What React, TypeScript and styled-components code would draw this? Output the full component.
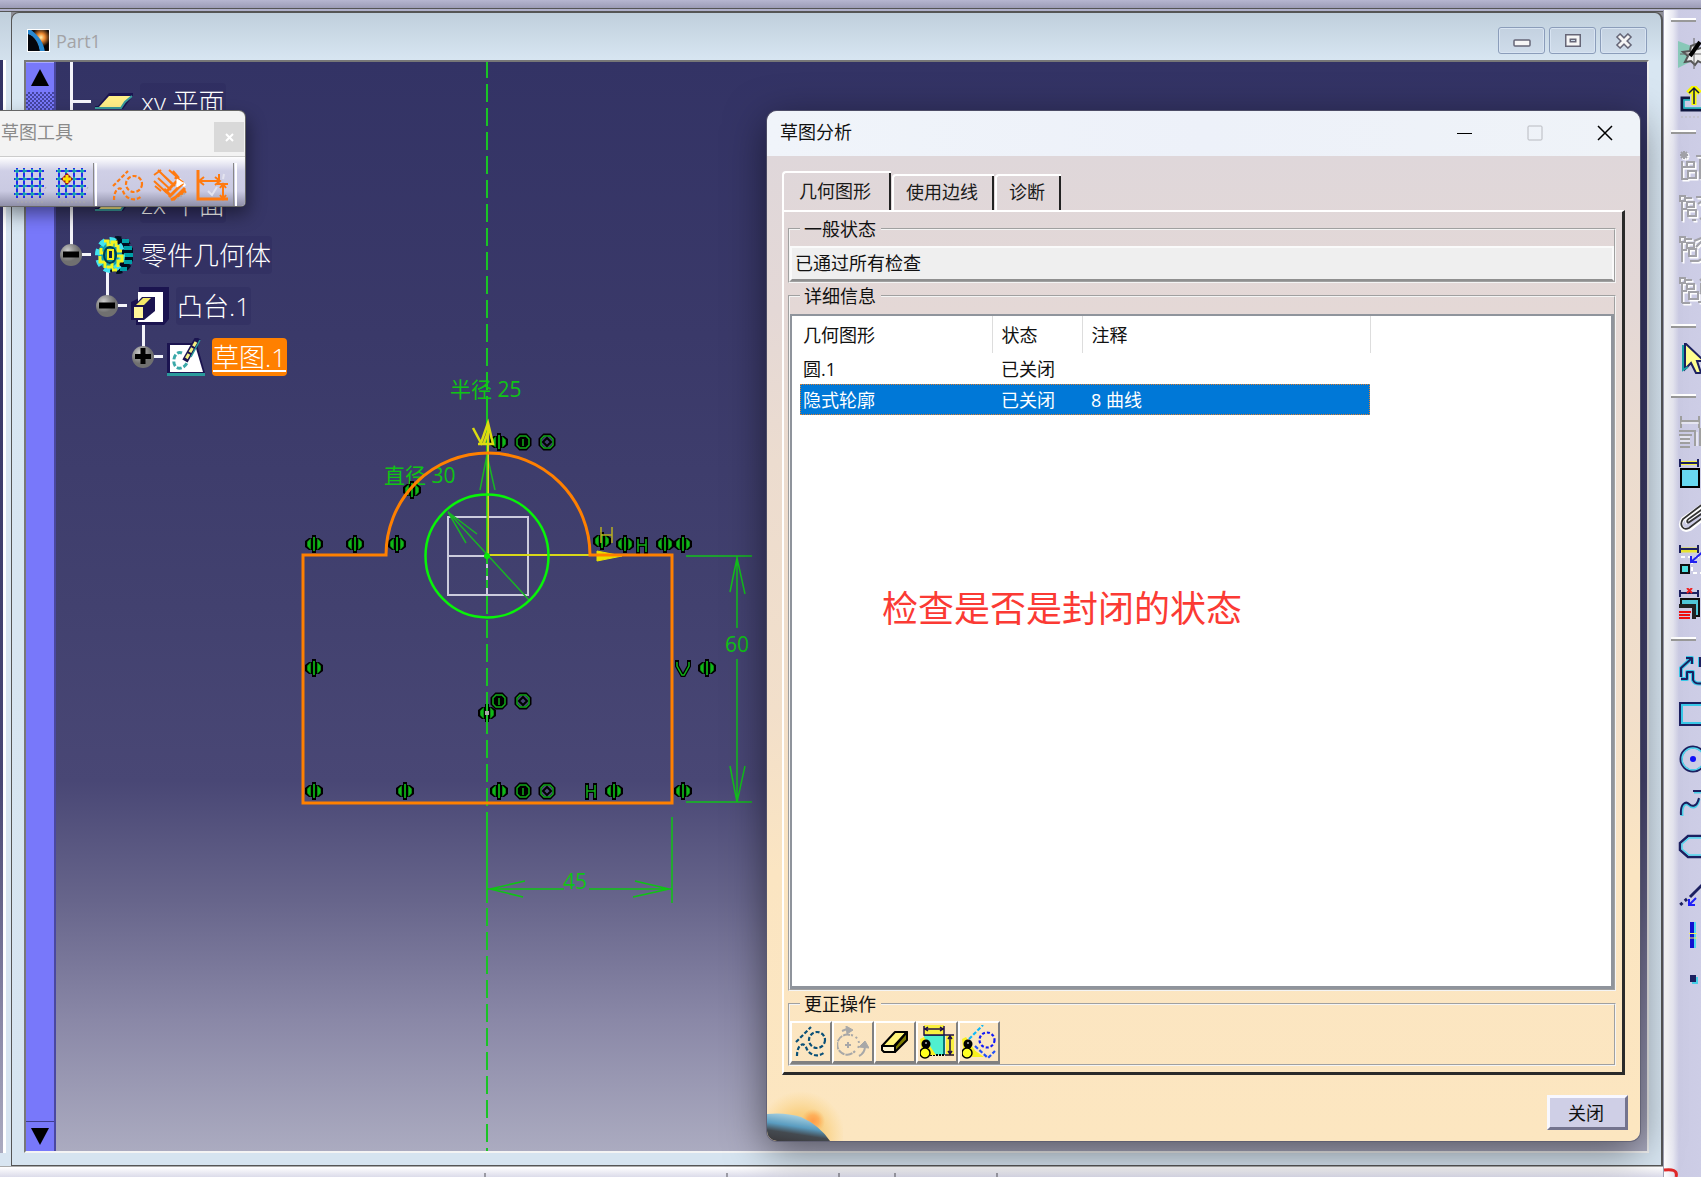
import React from "react";
import styled, { createGlobalStyle, css } from "styled-components";

const uiFont = `"Open Sans", "Noto Sans CJK SC", sans-serif`;

const GlobalStyle = createGlobalStyle`
  * { box-sizing: border-box; }
  html, body { margin: 0; height: 100%; overflow: hidden; }
  #root { height: 100%; }
  body, button, input { font-family: ${uiFont}; font-size: 18px; color: #111; }
  button { padding: 0; border: 0; background: none; }
`;

/* ---------- application frame ---------- */

const Page = styled.div`
  position: relative;
  display: flex;
  flex-direction: column;
  height: 100vh;
  overflow: hidden;
  background: #c9c9e2;
`;

const TopStrip = styled.div`
  flex: none;
  height: 12px;
  border-bottom: 4px double #555;
  background: linear-gradient(#b6b6d0, #9c9cb6 8px, #8c8c8c 8px);
`;

const Body = styled.div`
  flex: 1;
  min-height: 0;
  display: flex;
`;

const Desk = styled.div`
  flex: 1;
  min-width: 0;
  display: flex;
  flex-direction: column;
`;

const Windows = styled.div`
  flex: 1;
  min-height: 0;
  display: flex;
  background: #8c8c94;
`;

const viewGradient = `linear-gradient(#333365 0%, #3a3969 25%, #42416f 50%, #494775 66%, #67658b 77%, #8a88a7 88%, #ababc0 100%)`;

const NeighbourWindow = styled.div`
  flex: none;
  width: 11px;
  padding: 48px 0 13px;
  background: linear-gradient(#c0cfdc, #d8e5f1 60px);
  > div {
    height: 100%;
    width: 6px;
    border-right: 3px solid #fff;
    background: ${viewGradient} padding-box;
  }
`;

const PartWindow = styled.section`
  flex: 1;
  min-width: 0;
  display: flex;
  flex-direction: column;
  border: 1px solid #555;
  border-width: 1px 2px 1px 1px;
  border-radius: 8px 8px 0 0;
  padding: 0 12px 12px;
  background: linear-gradient(#c0cfdc, #d8e6f2 48px, #d6e4f0);
`;

const PartTitle = styled.header`
  flex: none;
  display: flex;
  align-items: center;
  gap: 6px;
  height: 47px;
  padding: 8px 2px 0 3px;
  color: #a3a3a6;
  span { flex: 1; font-size: 18px; }
`;

const CaptionButtons = styled.div`
  display: flex;
  gap: 4px;
  align-self: flex-start;
  padding-top: 6px;
`;

const CaptionButton = styled.button`
  display: grid;
  place-items: center;
  width: 47px;
  height: 27px;
  border: 1px solid #8b9dba;
  border-radius: 3px;
  box-shadow: inset 0 0 0 1px #d8e4f2;
  background: linear-gradient(#c3d1e0, #cfdcea);
`;

const View = styled.div`
  flex: 1;
  min-height: 0;
  display: flex;
  border: 2px solid #777;
  border-right-color: #eee;
  border-bottom-color: #f4f4f4;
  background: ${viewGradient};
`;

const ScrollBar = styled.div`
  flex: none;
  display: flex;
  flex-direction: column;
  width: 30px;
  border-right: 2px solid #4a48a0;
  background: #7878fa;
`;

const ScrollButton = styled.button<{ $down?: boolean }>`
  height: 30px;
  display: grid;
  place-items: center;
  border-top: 1px solid ${p => (p.$down ? "#3e3c90" : "#a8a8ff")};
`;

const ScrollTrough = styled.div`
  flex: 1;
  background: repeating-conic-gradient(#4444a0 0 25%, #7878fa 0 50%) 0 0 / 4px 4px;
  &::after { content: ""; display: block; height: calc(100% - 90px); margin-top: 90px; background: #7878fa; }
`;

const Canvas = styled.div`
  flex: 1;
  position: relative;
  isolation: isolate;
  min-width: 0;
  overflow: hidden;
`;

const Drawing = styled.svg`
  position: absolute;
  inset: 0;
  width: 100%;
  height: 100%;
  font-family: ${uiFont};
`;

/* ---------- specification tree ---------- */

const Tree = styled.ul`
  position: relative;
  margin: 0;
  padding: 14px 0 0 4px;
  list-style: none;
  ul { margin: 0; padding: 0 0 0 36px; list-style: none; }
`;

const Row = styled.div<{ $bare?: boolean }>`
  position: relative;
  display: flex;
  align-items: center;
  height: 51px;
  &::before {
    content: "";
    position: absolute;
    left: 10px;
    top: -26px;
    width: 3px;
    height: 51px;
    background: #f4f4fa;
  }
  &::after {
    content: "";
    position: absolute;
    left: ${p => (p.$bare ? 11 : 22)}px;
    top: 24px;
    width: ${p => (p.$bare ? 20 : 9)}px;
    height: 3px;
    background: #f4f4fa;
  }
  > svg { flex: none; position: relative; z-index: 1; }
`;

const Spacer = styled.span<{ $w: number }>`
  flex: none;
  width: ${p => p.$w}px;
`;

const Label = styled.span<{ $active?: boolean }>`
  margin-left: 7px;
  padding: 0 1px;
  height: 38px;
  border-radius: 4px;
  background: ${p => (p.$active ? "#ff8000" : "rgba(40, 36, 88, 0.3)")};
  color: #fff;
  font-size: 26px;
  font-weight: 300;
  line-height: 39px;
  white-space: nowrap;
  ${p => p.$active && css`text-decoration: underline; text-decoration-thickness: 2px; text-underline-offset: 3px;`}
`;

/* ---------- status bar and right tool column ---------- */

const StatusBar = styled.footer`
  flex: none;
  display: flex;
  height: 11px;
  border-top: 1px solid #aaa;
  background: linear-gradient(#fff, #dcdcea);
`;

const StatusCell = styled.div<{ $w: number }>`
  width: ${p => p.$w}px;
  margin-top: 6px;
  border-right: 2px solid #9a9aa4;
`;

const RedMark = styled.svg`
  position: absolute;
  right: 21px;
  bottom: 0;
`;

const ToolColumn = styled.nav`
  flex: none;
  display: flex;
  flex-direction: column;
  align-items: flex-start;
  width: 38px;
  margin-top: -2px;
  padding: 8px 0 0 7px;
  overflow: hidden;
  border-left: 1px solid #a0a0b4;
  background: linear-gradient(90deg, #fff 0, #e8e8f2 9px, #cbcbe4 15px, #cdcde6);
`;

const ToolHandle = styled.div`
  flex: none;
  width: 25px;
  height: 4px;
  border-top: 2px solid #fff;
  border-bottom: 2px solid #999;
`;

const ToolGroup = styled.div<{ $row: number; $top: number; $bottom: number }>`
  flex: none;
  display: grid;
  grid-auto-rows: ${p => p.$row}px;
  padding: ${p => p.$top}px 0 ${p => p.$bottom}px;
`;

const ToolButton = styled.button`
  display: grid;
  align-items: center;
  width: 36px;
  padding-left: 7px;
`;

/* ---------- floating toolbar ---------- */

const Palette = styled.section`
  position: absolute;
  left: 0;
  top: 111px;
  width: 245px;
  border-radius: 0 6px 4px 0;
  overflow: hidden;
  background: #f3f3f3;
  box-shadow: 0 0 0 1px #666, 3px 8px 18px rgba(0, 0, 0, 0.45);
`;

const PaletteTitle = styled.header`
  display: flex;
  justify-content: space-between;
  height: 45px;
  padding-left: 1px;
  color: #8a8a8a;
  line-height: 43px;
`;

const PaletteClose = styled.button`
  width: 30px;
  height: 30px;
  margin: 11px 1px 0 0;
  background: #d9d9d9;
  color: #f6f6f6;
  display: grid;
  place-items: center;
`;

const PaletteTools = styled.div`
  display: flex;
  align-items: center;
  height: 50px;
  padding: 6px 8px 0 9px;
  border-top: 1px solid #ccc;
  background: linear-gradient(#fff, #cfcfe6 14px, #cacae2 34px, #8f8fa8);
`;

const PaletteTool = styled.button`
  width: 42px;
  height: 42px;
  display: grid;
  place-items: center;
`;

const PaletteRule = styled.div`
  width: 4px;
  height: 44px;
  border-left: 1px solid #888;
  border-right: 2px solid #fff;
`;

/* ---------- analysis dialog ---------- */

const Dialog = styled.section`
  position: absolute;
  top: 111px;
  right: 61px;
  bottom: 36px;
  width: 873px;
  display: flex;
  flex-direction: column;
  overflow: hidden;
  border-radius: 10px;
  background: linear-gradient(#dfd7da 45px, #e4d8d6 200px, #ecdccf 350px, #f2dfca 600px, #fbe5c2 760px, #fce6c0);
  box-shadow: 0 0 0 1px rgba(90, 90, 110, 0.7), 0 10px 40px rgba(0, 0, 0, 0.5);
`;

const DialogTitle = styled.header`
  flex: none;
  display: flex;
  align-items: flex-start;
  height: 45px;
  padding-left: 13px;
  background: linear-gradient(90deg, #f0f4fa, #edf1f9 50%, #eff3f8);
  h1 { flex: 1; margin: 0; font-size: 18px; font-weight: 400; line-height: 42px; }
  button { width: 70px; height: 43px; display: grid; place-items: center; }
`;

const DialogBody = styled.div`
  flex: 1;
  min-height: 0;
  display: flex;
  flex-direction: column;
  padding: 15px 15px 0;
`;

const TabList = styled.div`
  flex: none;
  display: flex;
  align-items: flex-end;
  height: 39px;
`;

const Tab = styled.button<{ $active?: boolean }>`
  height: ${p => (p.$active ? 40 : 36)}px;
  margin-bottom: ${p => (p.$active ? -1 : 0)}px;
  margin-right: 1px;
  padding: ${p => (p.$active ? "0 20px 5px 15px" : "0 16px 4px 12px")};
  border: solid #fff;
  border-width: 2px 0 0 2px;
  border-radius: 4px 0 0 0;
  box-shadow: inset -2px 0 0 #222;
  color: #1a1a1a;
`;

const TabPanel = styled.div`
  flex: 1;
  min-height: 0;
  display: flex;
  flex-direction: column;
  padding: 4px 6px 6px 4px;
  border: 2px solid #fff;
  border-right: 3px solid #2a2a2a;
  border-bottom: 3px solid #2a2a2a;
`;

const Group = styled.fieldset<{ $fill?: boolean; $gap: number }>`
  min-width: 0;
  margin: 0;
  padding: 0;
  border: 2px groove #f4f4f4;
  ${p => p.$fill && css`flex: 1; min-height: 0; display: flex; flex-direction: column;`}
  legend {
    margin: 0 0 ${p => p.$gap}px 10px;
    padding: 0 5px 0 4px;
    height: 26px;
    line-height: 27px;
  }
`;

const StatusField = styled.input`
  display: block;
  width: 100%;
  height: 35px;
  padding: 0 0 4px 3px;
  border: 2px solid #fafafa;
  border-bottom-color: #8f8f8f;
  background: #efefef;
  outline: 0;
`;

const ListBox = styled.div`
  position: relative;
  flex: 1;
  padding: 0 8px;
  border: 2px solid #8f949c;
  border-width: 2px 3px 3px 2px;
  background: #fff;
`;

const Table = styled.table`
  table-layout: fixed;
  width: 570px;
  border-collapse: collapse;
  th, td { height: 31px; padding: 0 0 0 3px; font-weight: 400; text-align: left; line-height: 26px; }
  th { height: 37px; border-right: 1px solid #ddd; }
  th + th, td + td { padding-left: 9px; }
`;

const DataRow = styled.tr<{ $selected?: boolean }>`
  ${p => p.$selected && css`
    background: #0078d7;
    color: #fff;
    outline: 1px dotted #e08030;
    outline-offset: -1px;
  `}
`;

const Note = styled.p`
  position: absolute;
  left: 90px;
  top: 268px;
  margin: 0;
  color: #fb3a34;
  font-size: 36px;
  line-height: 50px;
  white-space: nowrap;
`;

const Actions = styled.div`
  display: flex;
  height: 43px;
`;

const ActionButton = styled.button`
  width: 42px;
  height: 43px;
  display: grid;
  place-items: center;
  border: 2px solid #fff;
  border-right: 2px solid #808080;
  border-bottom: 3px solid #808080;
`;

const DialogFooter = styled.footer`
  flex: none;
  display: flex;
  justify-content: space-between;
  align-items: flex-start;
  height: 66px;
`;

const Globe = styled.svg`
  display: block;
`;

const CloseButton = styled.button`
  width: 81px;
  height: 35px;
  margin: 20px 12px 0 0;
  padding: 0 3px 2px 0;
  border: 3px solid #f8f8ff;
  border-right-color: #74748e;
  border-bottom-color: #74748e;
  background: #cfcfe6;
`;

/* ---------- icons ---------- */

const Ball = ({ plus }: { plus?: boolean }) => (
  <svg width="22" height="22" viewBox="0 0 22 22">
    <defs>
      <radialGradient id="ball" cx="35%" cy="30%">
        <stop offset="0" stopColor="#ccc" />
        <stop offset=".6" stopColor="#909090" />
        <stop offset="1" stopColor="#707070" />
      </radialGradient>
    </defs>
    <circle cx="11" cy="11" r="11" fill="url(#ball)" />
    <path d={plus ? "M3 10.500H19M11 2V18" : "M3 10.500H19"} stroke="#000" strokeWidth={plus ? 5 : 6} />
  </svg>
);

const PlaneIcon = () => (
  <svg width="38" height="18" viewBox="0 0 38 18">
    <path d="M14 0H38V3L28 16H0V13H3Z" fill="#1b1450" />
    <path d="M14 3H36L26 14H4Z" fill="#ffee86" />
    <path d="M37 3L30 9L26 15H0" fill="none" stroke="#3a9c9c" strokeWidth="2" />
  </svg>
);

const GearIcon = () => (
  <svg width="38" height="40" viewBox="0 0 38 40">
    <ellipse cx="23" cy="20" rx="14" ry="17" fill="#000820" stroke="#001020" strokeWidth="4" strokeDasharray="6 4" />
    <path d="M27 6h7M29 13h8M29 20h9M29 27h8M25 34h7" stroke="#00a0a8" strokeWidth="4" />
    <ellipse cx="15" cy="20" rx="12" ry="15" fill="#10a0b0" stroke="#40e4f0" strokeWidth="6" strokeDasharray="6 4.500" />
    <path d="M9 6h4v4h4v-3h4v5M23 10v6h4M22 21h5v5h-4v6M6 13v5h4M5 21v6h5v6M12 32h5v-4M17 35h5" fill="none" stroke="#f4f420" strokeWidth="3" />
    <ellipse cx="15" cy="20" rx="6" ry="8" fill="#0c8890" stroke="#003c50" strokeWidth="2" />
    <path d="M13 15h5v9h-5z" fill="#102050" stroke="#f4f020" strokeWidth="2" />
  </svg>
);

const PadIcon = () => (
  <svg width="38" height="38" viewBox="0 0 38 38">
    <path d="M8 0H38V32L33 38H5V33H0V15L8 11Z" fill="#1b1450" />
    <path d="M7 5H32V35H7Z" fill="#fff" />
    <path d="M2 20L11 10H24V24L13 33H2Z" fill="#1b1450" />
    <path d="M3 20H12V31H3Z" fill="#fff59a" />
    <path d="M5 18L12 11H20L13 18Z" fill="#f4e868" />
  </svg>
);

const SketchIcon = () => (
  <svg width="38" height="38" viewBox="0 0 38 38">
    <path d="M0 5H25L31 0V10L38 35V38H0Z" fill="#1b1450" />
    <path d="M3 7H28L36 34H3Z" fill="#fff" />
    <path d="M0 36.500H38" stroke="#2a9a9c" strokeWidth="3" />
    <path d="M15 15C8 12 4 24 9 29C13 32 18 29 20 25" fill="none" stroke="#3aa8a8" strokeWidth="3" strokeDasharray="5 2" />
    <path d="M31 0L18 23" stroke="#1b1450" strokeWidth="6" />
    <path d="M29 4L19 21" stroke="#f4f080" strokeWidth="3" strokeDasharray="5 2" />
    <path d="M33 2L24 19" stroke="#2a9a9c" strokeWidth="1.500" />
  </svg>
);

const PartLogo = () => (
  <svg width="23" height="23" viewBox="0 0 22 22">
    <defs>
      <radialGradient id="flare" cx="62%" cy="35%" r="45%">
        <stop offset="0" stopColor="#fff0b0" />
        <stop offset=".4" stopColor="#f08a30" />
        <stop offset="1" stopColor="#080404" />
      </radialGradient>
    </defs>
    <rect width="22" height="22" fill="#fff" />
    <rect x="1" y="1" width="20" height="20" fill="url(#flare)" />
    <path d="M1 1H4C12 7 16 14 17 21H12C11 13 7 7 1 5Z" fill="#2888d0" />
    <path d="M1 5C7 7 11 13 12 21H1Z" fill="#04060c" />
  </svg>
);

const GridIcon = ({ snap }: { snap?: boolean }) => (
  <svg width="34" height="36" viewBox="0 0 34 36">
    <path d="M4 35h28M8 37h20M33 20l-2 4" stroke="#aaa" strokeDasharray="2 2" />
    <path d="M4 1V31M11 1V31M19 1V31M27 1V31M1 4H31M1 12H31M1 19H31M1 27H31" stroke="#2428f0" strokeWidth="2" />
    <path d="M4 1V31M11 1V31M19 1V31M27 1V31M1 4H31M1 12H31M1 19H31M1 27H31" stroke="#18a0b0" strokeWidth="2" strokeDasharray="4 3.700" strokeDashoffset="-1" />
    {snap && (
      <g>
        <path d="M12 6L18 12L12 18L6 12Z" fill="#a01818" />
        <path d="M12 8V16M8 12H16" stroke="#ffe000" strokeWidth="3" />
      </g>
    )}
  </svg>
);

const ConstructIcon = ({ c = "#ff7a10", drop = 0 }: { c?: string; drop?: number }) => (
  <svg width="32" height={32 + drop} viewBox={`0 ${-drop} 32 ${32 + drop}`} fill="none" stroke={c} strokeWidth="2.200" strokeDasharray="4 2">
    <path d="M1 16L16 1" />
    <path d="M2 30C2 18 9 16 11 21C13 28 22 33 30 26" />
    <circle cx="22" cy="14" r="8" />
  </svg>
);

const ConstraintHandIcon = () => (
  <svg width="34" height="36" viewBox="0 -2 34 36" fill="none" stroke="#ff7a10" strokeWidth="2">
    <path d="M1 6L8 1M5 1L19 15M1 12L14 24M5 9L18 21M9 5L22 17M2 17L8 22M16 1L24 8M20 2L26 9" />
    <path d="M26 10L32 17" stroke="#fff" strokeWidth="3" />
    <path d="M14 22L24 12M16 28L30 14M20 31L32 19M11 20L18 27M22 8L30 14M18 31L33 22" strokeWidth="3" />
    <path d="M24 10V18L30 14Z" fill="#fff" stroke="#fff" strokeWidth="1" />
    <path d="M24 30l8-6" stroke="#aaa" strokeDasharray="2 2" />
  </svg>
);

const DimensionIcon = () => (
  <svg width="32" height="36" viewBox="0 -2 32 36" fill="none" stroke="#ff7a10" strokeWidth="2">
    <path d="M2 1V30H32" strokeWidth="3" />
    <path d="M3 12H24M8 8L3 12L8 16M19 8L24 12L19 16M23 5V16" />
    <path d="M27 15V30M24 19L27 15L30 19M24 26L27 30L30 26M21 15H32" />
    <path d="M12 22L16 26L21 18M28 5L27 10" stroke="#e4e4f0" />
  </svg>
);

const RotateIcon = () => (
  <svg width="32" height="32" viewBox="0 0 32 32" fill="none" stroke="#a8a8a8" strokeWidth="2">
    <path d="M13 9A10 10 0 1 0 18 25" strokeDasharray="7 1" />
    <path d="M14 9C20 10 24 16 21 22" strokeDasharray="2 3" />
    <path d="M11 16V22M8 19H14M5 5L10 3" />
    <path d="M9 0L16 4L10 8Z" fill="#a8a8a8" strokeWidth="1" />
    <path d="M28 20C28 25 26 28 22 30" />
    <path d="M22 21L28 15L32 22Z" fill="#a8a8a8" strokeWidth="1" />
  </svg>
);

const EraserIcon = () => (
  <svg width="28" height="24" viewBox="0 0 28 24" stroke="#000" strokeWidth="2" strokeLinejoin="round">
    <path d="M1 16L14 2H26L13 16Z" fill="#fff47a" />
    <path d="M26 2V10L14 22V16Z" fill="#7c7a00" />
    <path d="M1 16H14V22H3L1 20Z" fill="#fdf4d0" />
  </svg>
);

const Stamp = () => (
  <g>
    <path d="M0 14L4 12L16 30H2Z" fill="#f8f020" />
    <circle cx="6" cy="19" r="4.500" fill="#000" />
    <circle cx="5" cy="28" r="5" fill="#ffff20" stroke="#000" strokeWidth="1.500" />
    <path d="M6 17v2" stroke="#fff" />
  </g>
);

const AnalyseDimIcon = () => (
  <svg width="34" height="34" viewBox="0 0 34 34" fill="none">
    <path d="M4 10H24V30H4Z" fill="#50f0d0" />
    <path d="M4 10H24V30" stroke="#087880" strokeWidth="2" />
    <path d="M4 0H24V10H4ZM26 10H34V31H26Z" fill="#f8f040" />
    <path d="M4 1V10H24V1M5 4H23M8 2L5 4L8 6M20 2L23 4L20 6M25 10H34M25 30H34M30 11V29M28 14L30 11L32 14M28 26L30 29L32 26" stroke="#201048" strokeWidth="1.500" />
    <path d="M10 30H24" stroke="#000" strokeWidth="2" strokeDasharray="2 1" />
    <Stamp />
  </svg>
);

const AnalyseGeoIcon = () => (
  <svg width="34" height="34" viewBox="0 0 34 34" fill="none">
    <path d="M8 22L22 32H10Z" fill="#f8f020" />
    <path d="M7 14L21 0" stroke="#10b8f8" strokeWidth="2.200" strokeDasharray="4 2" />
    <path d="M13 21L26 33L33 26" stroke="#2050f8" strokeWidth="2.200" strokeDasharray="4 2" />
    <circle cx="25" cy="15" r="7.500" stroke="#1018f8" strokeWidth="2.200" strokeDasharray="3 2" />
    <Stamp />
  </svg>
);

const Navy = "#1c2060";

const Embossed = ({ d }: { d: string }) => (
  <g fill="none" strokeWidth="2">
    <path d={d} stroke="#fff" transform="translate(1.500 1.500)" />
    <path d={d} stroke="#a2a2a8" />
  </g>
);

const branch = "M2 4h5v5h-5zM4 9V29M4 17H9M9 10h7v5h-7zM8 6H14";

const toolShapes: Record<string, React.ReactNode> = {
  workbench: (
    <g>
      <path d="M0 3L16 9V22L0 30Z" fill="#88c8b8" />
      <path d="M18 6L20 11L26 9V26L20 23L17 27L13 23L7 24L10 18L5 14L12 13L13 8Z" fill="#eee" stroke="#555" strokeWidth="2" />
      <path d="M16 0V31M2 16H28" stroke="#666" />
      <path d="M22 4L12 18" stroke="#000" strokeWidth="4" />
    </g>
  ),
  exit: (
    <g fill="none">
      <path d="M12 12H4V24H28" stroke="#101840" strokeWidth="3" />
      <path d="M12 14H6V22H28" stroke="#10b0b8" strokeWidth="1.500" />
      <path d="M16 19V3M10 7L16 1L22 7" stroke="#f8f800" strokeWidth="5" />
      <path d="M16 18V3M11 7L16 2L21 7" stroke="#101840" strokeWidth="1.500" />
      <path d="M3 31h22" stroke="#bbb" strokeDasharray="2 2" />
    </g>
  ),
  tree1: <Embossed d="M6 0V8M2 4H10M3 1L9 7M9 1L3 7M4 10V28H10M4 16H9M9 11h7v5h-7zM10 20h8v7h-8zM18 5H28M22 8V28M24 12L28 8" />,
  tree2: <Embossed d={`${branch}M10 18h8v6h-8zM18 5H28M20 12L28 6M14 28H18M22 26L27 30`} />,
  tree3: <Embossed d={`${branch}M11 16h7v7h-7zM16 8L28 3M18 14L24 8M12 28H20L27 24`} />,
  tree4: <Embossed d={`${branch}M11 18h9v7h-9zM4 29H12M22 5L28 12L22 20M20 28H28M23 9V18`} />,
  select: (
    <g>
      <path d="M7 0V26L13 20L18 30H23L19 18H26Z" fill="#ffff90" stroke={Navy} strokeWidth="2" />
      <path d="M5 2V27L10 24" fill="none" stroke="#18a0a8" strokeWidth="2" />
    </g>
  ),
  props: (
    <g fill="none" stroke="#a0a0a0" strokeWidth="2">
      <path d="M3 0V12M21 0V12M3 5H21M1 15H17V30M1 19H14M2 23H12M2 27H12M2 31H12M22 12V30" />
      <path d="M3 7H21M19 16V30M2 21H12M2 25H12" stroke="#fff" strokeWidth="1" />
    </g>
  ),
  constraint: (
    <g>
      <path d="M2 2H20V6H2Z" fill="#f4f040" />
      <path d="M2 0V8M20 0V8M3 4H19" stroke={Navy} strokeWidth="2" />
      <path d="M3 10H21V28H3Z" fill="#68d8f0" stroke="#000" strokeWidth="2" />
    </g>
  ),
  clip: (
    <g fill="none">
      <path d="M28 1L5 17C0 24 5 30 12 27L28 14M10 21C8 19 10 17 12 16L26 6" stroke="#fff" strokeWidth="4" />
      <path d="M26 1L5 17C1 23 5 29 11 26L28 13M10 21C8 19 10 17 12 16L26 6M10 21L26 10" stroke="#333" strokeWidth="1.800" />
    </g>
  ),
  animate: (
    <g fill="none">
      <path d="M2 5H20" stroke="#e8e430" strokeWidth="5" />
      <path d="M2 0V8M20 0V8M3 4H19" stroke={Navy} strokeWidth="2" />
      <path d="M3 20H11V28H3Z" fill="#50e0e0" stroke="#111" strokeWidth="2" />
      <path d="M3 12H24V28H14V18" stroke="#fff" strokeWidth="2" strokeDasharray="4 3" />
      <path d="M28 4L13 17M13 11V17H19" stroke="#2020f0" strokeWidth="2" />
    </g>
  ),
  edit: (
    <g fill="none">
      <path d="M2 2V9M20 2V9M3 5H19" stroke={Navy} strokeWidth="2" />
      <path d="M9 0L14 5M14 0L9 5" stroke="#f02020" strokeWidth="2" />
      <path d="M3 11H21V28H17V17H3Z" fill="#50c8d8" stroke="#111" strokeWidth="2" />
      <path d="M1 18H16V31" stroke="#222" strokeWidth="4" />
      <path d="M1 24H13M1 27H12M1 30H12" stroke="#f01010" strokeWidth="2" />
    </g>
  ),
  profile: (
    <g fill="none" strokeLinejoin="round">
      <path d="M3 24H9V17H15V25Q17 30 26 28M22 2V12M3 22V13L13 4M8 3H14V9" stroke="#38c8e8" strokeWidth="4" />
      <path d="M3 24H9V17H15V25Q17 30 26 28M22 2V12M3 22V13L13 4M8 3H14V9" stroke={Navy} strokeWidth="2" />
    </g>
  ),
  rect: (
    <g fill="none">
      <path d="M4 6H28V24H4Z" stroke="#38c8e8" strokeWidth="2" />
      <path d="M2 4H28V26H2Z" stroke={Navy} strokeWidth="2" />
    </g>
  ),
  circle: (
    <g fill="none">
      <circle cx="15" cy="16" r="12" stroke={Navy} strokeWidth="3" />
      <circle cx="15" cy="16" r="11" stroke="#50d8f0" strokeWidth="1.500" />
      <circle cx="15" cy="16" r="3" fill="#1010f8" />
    </g>
  ),
  spline: (
    <g fill="none">
      <path d="M4 29C3 17 8 15 11 18S19 22 21 12M16 5H28" stroke="#48d0e8" strokeWidth="3" />
      <path d="M3 28C2 16 8 14 11 17S19 20 21 11M15 4H28" stroke={Navy} strokeWidth="2" />
    </g>
  ),
  ellipse: (
    <g fill="none">
      <path d="M28 5H10L2 12V19L10 26H28" stroke={Navy} strokeWidth="2.500" />
      <path d="M28 7H11L4 13V18L11 24H28" stroke="#50d8f0" strokeWidth="1.500" />
    </g>
  ),
  line: (
    <g fill="none">
      <path d="M28 6L12 22" stroke={Navy} strokeWidth="3" />
      <path d="M9 24L1 31" stroke={Navy} strokeWidth="3" strokeDasharray="3 3" />
      <path d="M18 23L11 30M11 24V30H17" stroke="#2020f8" strokeWidth="2" />
    </g>
  ),
  axis: (
    <g>
      <path d="M14 3V29" stroke="#1010d0" strokeWidth="4" />
      <path d="M17 3V29" stroke="#50d8f0" strokeWidth="2" />
      <path d="M11 14.500H19M11 19H19" stroke="#f4f060" />
    </g>
  ),
  point: (
    <g>
      <path d="M14 14H20V21H14Z" fill="#48d0e8" />
      <path d="M12 12H18V19H12Z" fill={Navy} />
    </g>
  ),
};

const toolGroups = [
  { row: 48, top: 8, bottom: 4, tools: [["workbench", "工作台"], ["exit", "退出工作台"]] },
  { row: 41, top: 12, bottom: 14, tools: [["tree1", "树 1"], ["tree2", "树 2"], ["tree3", "树 3"], ["tree4", "树 4"]] },
  { row: 62, top: 0, bottom: 4, tools: [["select", "选择"]] },
  { row: 43, top: 12, bottom: 12, tools: [["props", "约束对话框"], ["constraint", "约束"], ["clip", "固联"], ["animate", "动画约束"], ["edit", "编辑多重约束"]] },
  { row: 44, top: 8, bottom: 0, tools: [["profile", "轮廓"], ["rect", "矩形"], ["circle", "圆"], ["spline", "样条"], ["ellipse", "椭圆"], ["line", "直线"], ["axis", "轴"], ["point", "点"]] },
];

/* ---------- sketch geometry ---------- */

const Coincidence = ({ x, y }: { x: number; y: number }) => (
  <g transform={`translate(${x} ${y})`}>
    <path d="M-5 -6H-2V-9H2V-6H5L9 -3V3L5 6H2V9H-2V6H-5L-9 3V-3Z" fill="#000" />
    <path d="M-4 -4V4L-6 2V-2ZM4 -4V4L6 2V-2Z" fill="#10d018" stroke="#10b018" strokeWidth="1.500" />
    <path d="M0 -7V7" stroke="#10d018" strokeWidth="1.500" />
  </g>
);

const Ring = ({ x, y, bar }: { x: number; y: number; bar?: boolean }) => (
  <g transform={`translate(${x} ${y})`}>
    <path d="M-3 -7H3L7 -3V3L3 7H-3L-7 3V-3Z" fill={bar ? "#000" : "none"} stroke="#000" strokeWidth="3" />
    <path d="M-3 -6H3L6 -3V3L3 6H-3L-6 3V-3Z" fill="none" stroke="#10a818" strokeWidth="1.500" />
    {bar ? <path d="M0 -3V4" stroke="#10a818" strokeWidth="1.500" /> : <path d="M0 -4L4 0L0 4L-4 0Z" fill="none" stroke="#000" strokeWidth="2" />}
  </g>
);

const Glyph = ({ d }: { d: string }) => (
  <g fill="none">
    <path d={d} stroke="#000" strokeWidth="4" strokeLinecap="square" />
    <path d={d} stroke="#10b018" strokeWidth="1.500" />
  </g>
);

const coincidences = [
  [314, 544], [355, 544], [397, 544], [412, 490], [499, 442], [602, 541], [625, 544], [665, 544], [683, 544],
  [314, 668], [707, 668], [314, 791], [405, 791], [499, 791], [614, 791], [683, 791], [487, 713],
];

const Sketch = () => (
  <Drawing aria-label="Part1">
    <g transform="translate(-56 -62)" fill="none">
      <path d="M487 36V396M487 596V811M487 908V1160" stroke="#19c425" strokeWidth="2" strokeDasharray="18 6" />
      <path d="M487 396V556M487 812V903" stroke="#19c425" strokeWidth="2" />
      <path d="M448 517H528V595H448ZM448 556H487M487 556V595" stroke="#ccccdd" strokeWidth="2" />
      <path d="M487 556V588" stroke="#19c425" strokeWidth="2" strokeDasharray="8 4" />
      <g fill="#0fc414" fontSize="21">
        <text x="450" y="397">半径 25</text>
        <text x="384" y="483">直径 30</text>
        <text x="725" y="652">60</text>
        <text x="563" y="889">45</text>
      </g>
      <path d="M487 455L480 490M487 455L495 490M448 512L529 600M448 512L477 534M448 512L466 543" stroke="#19b425" strokeWidth="1.500" />
      <path d="M686 556H752M686 802H752M737 556V628M737 659V802M737 558L730 592M737 558L745 594M737 802L730 766M737 802L745 766" stroke="#12c01c" strokeWidth="1.500" />
      <path d="M487 889H564M589 889H672M672 817V903M490 889L525 881M490 889L523 897M669 889L635 881M669 889L633 897" stroke="#0fc414" strokeWidth="1.500" />
      {coincidences.map(([x, y]) => <Coincidence key={`${x}-${y}`} x={x} y={y} />)}
      <Ring x={523} y={442} bar />
      <Ring x={523} y={791} bar />
      <Ring x={547} y={442} />
      <Ring x={547} y={791} />
      <Ring x={499} y={701} bar />
      <Ring x={523} y={701} />
      <Glyph d="M638 539V552M646 539V552M638 545H646" />
      <Glyph d="M587 785V798M595 785V798M587 791H595" />
      <Glyph d="M677 662V666L682 675H684L689 666V662" />
      <path d="M488 556V422M487 555H600" stroke="#d8d818" strokeWidth="2" />
      <path d="M473 428L481 443L488 423L493 444H478M484 443L488 432" stroke="#dcdc10" strokeWidth="2.500" />
      <path d="M597 551L622 556L597 561Z" fill="#e8e000" stroke="#e8e000" />
      <path d="M601 527V543M612 527V543M601 535H612" stroke="#b8b020" strokeWidth="1.500" />
      <path d="M487 453V556" stroke="#30c820" strokeWidth="1" />
      <circle cx="487" cy="556" r="61.500" stroke="#08f408" strokeWidth="2.500" />
      <path d="M303 555H386A102 102 0 0 1 590 555H672V803H303Z" stroke="#ff8000" strokeWidth="3" />
      <circle cx="487" cy="556" r="3" fill="#08e808" />
      <path d="M487 700V727" stroke="#19c425" strokeWidth="2" />
      <rect x="485" y="711" width="4" height="4" fill="#aaa" />
    </g>
  </Drawing>
);

const rows = [
  ["圆.1", "已关闭", ""],
  ["隐式轮廓", "已关闭", "8 曲线"],
];

export default function App() {
  return (
    <Page>
      <GlobalStyle />
      <TopStrip />
      <Body>
        <Desk>
          <Windows>
            <NeighbourWindow><div /></NeighbourWindow>
            <PartWindow>
              <PartTitle>
                <PartLogo />
                <span>Part1</span>
                <CaptionButtons>
                  <CaptionButton aria-label="最小化">
                    <svg width="18" height="14"><rect x="1" y="6" width="16" height="6" rx="1" fill="#f6f6f6" stroke="#667" strokeWidth="1.500" /></svg>
                  </CaptionButton>
                  <CaptionButton aria-label="最大化">
                    <svg width="18" height="16"><rect x="4" y="4" width="10" height="7" fill="none" stroke="#667" strokeWidth="6" /><rect x="4" y="4" width="10" height="7" fill="none" stroke="#f6f6f6" strokeWidth="3" /></svg>
                  </CaptionButton>
                  <CaptionButton aria-label="关闭窗口">
                    <svg width="20" height="16" fill="none"><path d="M4 2L16 14M16 2L4 14" stroke="#667" strokeWidth="6" /><path d="M5 3L15 13M15 3L5 13" stroke="#f6f6f6" strokeWidth="3" /></svg>
                  </CaptionButton>
                </CaptionButtons>
              </PartTitle>
              <View>
                <ScrollBar>
                  <ScrollButton aria-label="向上"><svg width="18" height="18"><path d="M9 0L18 17H0Z" /></svg></ScrollButton>
                  <ScrollTrough />
                  <ScrollButton $down aria-label="向下"><svg width="18" height="18"><path d="M0 0H18L9 17Z" /></svg></ScrollButton>
                </ScrollBar>
                <Canvas>
                  <Sketch />
                  <Tree>
                    <li><Row $bare><Spacer $w={35} /><PlaneIcon /><Label>xy 平面</Label></Row></li>
                    <li><Row $bare><Spacer $w={35} /><PlaneIcon /><Label>yz 平面</Label></Row></li>
                    <li><Row $bare><Spacer $w={35} /><PlaneIcon /><Label>zx 平面</Label></Row></li>
                    <li>
                      <Row><Ball /><Spacer $w={13} /><GearIcon /><Label>零件几何体</Label></Row>
                      <ul>
                        <li>
                          <Row><Ball /><Spacer $w={13} /><PadIcon /><Label>凸台.1</Label></Row>
                          <ul>
                            <li><Row><Ball plus /><Spacer $w={13} /><SketchIcon /><Label $active>草图.1</Label></Row></li>
                          </ul>
                        </li>
                      </ul>
                    </li>
                  </Tree>
                </Canvas>
              </View>
            </PartWindow>
          </Windows>
          <StatusBar>
            <StatusCell $w={486} />
            <StatusCell $w={242} />
            <StatusCell $w={112} />
            <StatusCell $w={56} />
            <StatusCell $w={102} />
          </StatusBar>
        </Desk>
        <ToolColumn>
          {toolGroups.map(g => (
            <React.Fragment key={g.tools[0][0]}>
              <ToolHandle />
              <ToolGroup $row={g.row} $top={g.top} $bottom={g.bottom}>
                {g.tools.map(([name, label]) => (
                  <ToolButton key={name} aria-label={label}>
                    <svg width="28" height="32" viewBox="0 0 28 32">{toolShapes[name]}</svg>
                  </ToolButton>
                ))}
              </ToolGroup>
            </React.Fragment>
          ))}
        </ToolColumn>
      </Body>
      <RedMark width="17" height="9"><path d="M1 2C9 1 15 2 13 9" fill="none" stroke="#e02828" strokeWidth="3" /></RedMark>

      <Palette>
        <PaletteTitle>
          草图工具
          <PaletteClose aria-label="关闭工具栏"><svg width="9" height="9"><path d="M1 1L8 8M8 1L1 8" stroke="#fff" strokeWidth="2" /></svg></PaletteClose>
        </PaletteTitle>
        <PaletteTools>
          <PaletteTool aria-label="网格"><GridIcon /></PaletteTool>
          <PaletteTool aria-label="点对齐"><GridIcon snap /></PaletteTool>
          <PaletteRule />
          <Spacer $w={10} />
          <PaletteTool aria-label="构造元素"><ConstructIcon drop={2} /></PaletteTool>
          <PaletteTool aria-label="几何约束"><ConstraintHandIcon /></PaletteTool>
          <PaletteTool aria-label="尺寸约束"><DimensionIcon /></PaletteTool>
          <PaletteRule />
        </PaletteTools>
      </Palette>

      <Dialog role="dialog" aria-labelledby="analysis-title">
        <DialogTitle>
          <h1 id="analysis-title">草图分析</h1>
          <button aria-label="最小化"><svg width="16" height="16"><path d="M0 8.500H15" stroke="#000" /></svg></button>
          <button aria-label="最大化" disabled><svg width="16" height="16"><rect x="1" y="1" width="14" height="14" rx="1" fill="none" stroke="#b8bac0" /></svg></button>
          <button aria-label="关闭"><svg width="16" height="16"><path d="M1 1L15 15M15 1L1 15" stroke="#000" strokeWidth="1.500" /></svg></button>
        </DialogTitle>
        <DialogBody>
          <TabList role="tablist">
            <Tab $active role="tab" aria-selected="true">几何图形</Tab>
            <Tab role="tab">使用边线</Tab>
            <Tab role="tab">诊断</Tab>
          </TabList>
          <TabPanel role="tabpanel">
            <Group $gap={4}>
              <legend>一般状态</legend>
              <StatusField readOnly aria-label="一般状态" value="已通过所有检查" />
            </Group>
            <Group $fill $gap={5}>
              <legend>详细信息</legend>
              <ListBox>
                <Table>
                  <colgroup><col width="192" /><col width="90" /><col width="288" /></colgroup>
                  <thead><tr><th>几何图形</th><th>状态</th><th>注释</th></tr></thead>
                  <tbody>
                    {rows.map((r, i) => (
                      <DataRow key={r[0]} $selected={i === 1}>{r.map((c, j) => <td key={j}>{c}</td>)}</DataRow>
                    ))}
                  </tbody>
                </Table>
                <Note>检查是否是封闭的状态</Note>
              </ListBox>
            </Group>
            <Group $gap={4}>
              <legend>更正操作</legend>
              <Actions>
                <ActionButton aria-label="构造模式"><ConstructIcon c="#0a5078" /></ActionButton>
                <ActionButton aria-label="关闭弧" disabled><RotateIcon /></ActionButton>
                <ActionButton aria-label="擦除"><EraserIcon /></ActionButton>
                <ActionButton aria-label="隐藏约束"><AnalyseDimIcon /></ActionButton>
                <ActionButton aria-label="隐藏构造几何"><AnalyseGeoIcon /></ActionButton>
              </Actions>
            </Group>
          </TabPanel>
        </DialogBody>
        <DialogFooter>
          <Globe width="76" height="66" viewBox="0 0 76 66">
            <defs>
              <radialGradient id="glow" cx="46" cy="46" r="12" gradientUnits="userSpaceOnUse">
                <stop offset="0" stopColor="#ff9c48" />
                <stop offset=".5" stopColor="#ffa850" stopOpacity=".8" />
                <stop offset="1" stopColor="#fbb860" stopOpacity="0" />
              </radialGradient>
              <radialGradient id="halo" cx="34" cy="60" r="44" gradientUnits="userSpaceOnUse">
                <stop offset="0" stopColor="#f8c868" />
                <stop offset=".5" stopColor="#f9d084" />
                <stop offset="1" stopColor="#fbd890" stopOpacity="0" />
              </radialGradient>
              <linearGradient id="earth" x1=".2" y1="1" x2=".55" y2="0">
                <stop offset="0" stopColor="#3c3c40" />
                <stop offset=".3" stopColor="#444a50" />
                <stop offset=".55" stopColor="#5a9cc0" />
                <stop offset="1" stopColor="#b8dce8" />
              </linearGradient>
            </defs>
            <rect width="76" height="66" fill="url(#halo)" />
            <rect width="76" height="66" fill="url(#glow)" />
            <path d="M0 39Q18 37 34 42Q52 50 63 66H0Z" fill="url(#earth)" />
          </Globe>
          <CloseButton>关闭</CloseButton>
        </DialogFooter>
      </Dialog>
    </Page>
  );
}
